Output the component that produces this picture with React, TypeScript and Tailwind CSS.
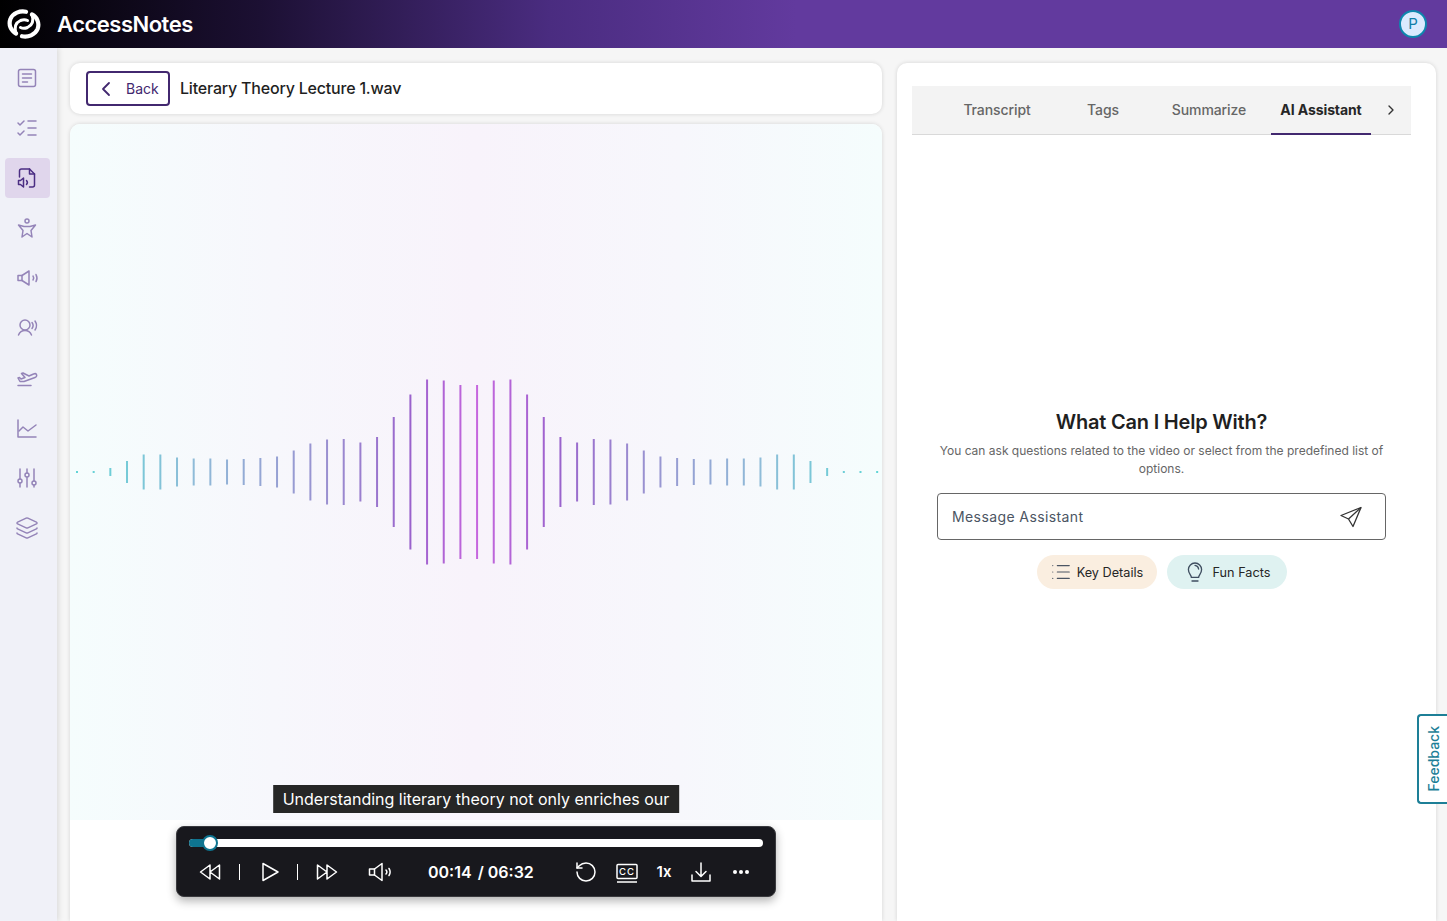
import { List, Layers, RotateCcw, ChevronLeft, ChevronRight, ListChecks } from "lucide-react";

const halfBars = [2, 2, 8, 22, 35, 35, 29, 27, 27, 25, 26, 28, 31, 43, 57, 65, 66, 59, 70, 110, 155, 185, 183, 174];
const bars = [...halfBars, ...[...halfBars].reverse(), 2];

function Logo() {
  return (
    <svg width="34" height="30" viewBox="0 0 34 30" fill="none" stroke="white" strokeLinecap="round">
      <path d="M19 2.800C13 1.500 6 4 3.400 10C1.200 16 4 22 9 24.500" strokeWidth="4.200" />
      <path d="M9 24.500C7 18 9 13.500 13.500 11.500C16 10.500 18.500 10.500 20.500 11.500" strokeWidth="3" />
      <path d="M15 27.200C21 28.500 28 26 30.600 20C32.800 14 30 8 25 5.500" strokeWidth="4.200" />
      <path d="M25 5.500C27 12 25 16.500 20.500 18.500C18 19.500 15.500 19.500 13.500 18.500" strokeWidth="3" />
    </svg>
  );
}

function NavIcon({ children }: { children: React.ReactNode }) {
  return (
    <svg width="24" height="24" viewBox="0 0 24 24" fill="none" stroke="currentColor" strokeWidth="1.500" strokeLinecap="round" strokeLinejoin="round">
      {children}
    </svg>
  );
}

const navIcons = [
  <NavIcon>
    <rect x="3.500" y="3.500" width="17" height="17" rx="2" />
    <path d="M7.500 8h9M7.500 12h9M7.500 16h5" />
  </NavIcon>,
  <ListChecks size={24} strokeWidth={1.500} />,
  <NavIcon>
    <path d="M4.500 11V5a2 2 0 0 1 2-2h8l5 5v11a2 2 0 0 1-2 2h-3" />
    <path d="M14.500 3v5h5" />
    <path d="M3.500 14.500v4h2l3 2.500v-9l-3 2.500h-2z" />
    <path d="M11.500 14.500a3 3 0 0 1 0 4" />
  </NavIcon>,
  <NavIcon>
    <circle cx="12" cy="5" r="2" />
    <path d="M3.500 9l5.500 1.500h6L20.500 9l-4.500 5.500 1 6.500-5-3.500L7 21l1-6.500z" />
  </NavIcon>,
  <NavIcon>
    <path d="M3 9.500h4v5H3z" />
    <path d="M7 9.500L14 5v14l-7-4.500" />
    <path d="M18 10a3.500 3.500 0 0 1 0 4M21 8.500a7 7 0 0 1 0 7" />
  </NavIcon>,
  <NavIcon>
    <circle cx="10" cy="9" r="5" />
    <path d="M3.500 19c1-2.500 3.500-4.500 6.500-4.500s5.500 2 6.500 4.500" />
    <path d="M17 6.500a5 5 0 0 1 0 6M20 5a8 8 0 0 1 0 9" />
  </NavIcon>,
  <NavIcon>
    <path d="M3 12l2 3.500h4l11-4c1.500-.5 2-2 1.500-3s-2-1-3-.5L14 10 8 7 6.500 7.500l3.500 4-4 1.500-1.500-1.500z" />
    <path d="M3 19.500h13" />
  </NavIcon>,
  <NavIcon>
    <path d="M3 4v17h18" />
    <path d="M4 15l4-4 5 4 8-6" />
  </NavIcon>,
  <NavIcon>
    <path d="M5 3v10M5 17v4M12 3v4M12 11v10M19 3v12M19 19v2" />
    <circle cx="5" cy="15" r="2" />
    <circle cx="12" cy="9" r="2" />
    <circle cx="19" cy="17" r="2" />
  </NavIcon>,
  <Layers size={24} strokeWidth={1.500} />,
];

function CtlIcon({ children }: { children: React.ReactNode }) {
  return (
    <svg width="24" height="24" viewBox="0 0 24 24" fill="none" stroke="white" strokeWidth="1.500" strokeLinecap="round" strokeLinejoin="round">
      {children}
    </svg>
  );
}

function Waveform() {
  return (
    <svg className="w-full h-[200px]" viewBox="0 0 812 200" fill="none">
      <defs>
        <linearGradient id="wave" gradientUnits="userSpaceOnUse" x1="0" y1="0" x2="812" y2="0">
          <stop offset="0" stopColor="#5fd6d6" />
          <stop offset="0.15" stopColor="#8fbcd8" />
          <stop offset="0.32" stopColor="#9a8fd0" />
          <stop offset="0.42" stopColor="#9a62cc" />
          <stop offset="0.5" stopColor="#c666de" />
          <stop offset="0.6" stopColor="#9a62cc" />
          <stop offset="0.7" stopColor="#9a8fd0" />
          <stop offset="0.85" stopColor="#8fbcd8" />
          <stop offset="1" stopColor="#5fd6d6" />
        </linearGradient>
      </defs>
      {bars.map((h, i) => {
        const x = 7 + i * 16.67;
        return <rect key={i} x={x - 1} y={100 - h / 2} width="2" height={h} fill="url(#wave)" />;
      })}
    </svg>
  );
}

export default function App() {
  return (
    <div className="h-[921px] w-full overflow-hidden relative flex flex-col bg-[#f6f6f6] font-['Inter',sans-serif] text-[#1f1f1f]">
      {/* Top bar */}
      <header className="h-12 shrink-0 flex items-center pl-[7px] pr-5 bg-[linear-gradient(90deg,#000000_0%,#1c1033_18%,#4a2c80_38%,#623a9e_55%,#623a9e_100%)]">
        <Logo />
        <span className="ml-[16px] text-[22px] font-semibold tracking-[-0.5px] text-white">AccessNotes</span>
        <div className="ml-auto w-7 h-7 rounded-full bg-[#dbeafe] border-2 border-[#0e86ad] flex items-center justify-center text-[15px] text-[#0e7ea8]">
          P
        </div>
      </header>

      <div className="flex-1 flex min-h-0">
        {/* Sidebar */}
        <aside className="w-[57px] shrink-0 bg-[#f0f1f8] shadow-[2px_0_5px_rgba(0,0,0,0.1)] pt-[10px] px-[5px] flex flex-col gap-[10px]">
          {navIcons.map((icon, i) => (
            <div
              key={i}
              className={
                i === 2
                  ? "h-10 w-[45px] shrink-0 rounded-[4px] bg-[#e0d6ec] text-[#4b2e83] flex items-center justify-center pr-px"
                  : "h-10 w-[45px] shrink-0 text-[#9484b8] flex items-center justify-center pr-px"
              }
            >
              {icon}
            </div>
          ))}
        </aside>

        <main className="flex-1 flex gap-[15px] pt-[15px] pl-[13px] min-w-0">
          {/* Left column */}
          <section className="w-[812px] shrink-0 flex flex-col gap-[10px]">
            <div className="h-[51px] shrink-0 rounded-[10px] bg-white shadow-[0_0_4px_rgba(0,0,0,0.14)] flex items-center pl-4">
              <button className="w-[84px] h-[35px] rounded-[4px] border-2 border-[#42286f] flex items-center pl-[6px] text-[14px] text-[#42286f]">
                <ChevronLeft size={24} strokeWidth={1.800} />
                <span className="ml-[8px]">Back</span>
              </button>
              <h1 className="ml-[10px] pb-px text-[16px] font-medium tracking-[-0.2px]">Literary Theory Lecture 1.wav</h1>
            </div>

            <div className="flex-1 rounded-t-[10px] bg-white shadow-[0_0_4px_rgba(0,0,0,0.14)] relative flex flex-col">
              <div className="h-[696px] rounded-t-[10px] bg-[linear-gradient(90deg,#f5fdfd_0%,#f7f7fc_25%,#f8f3fb_50%,#f7f7fc_75%,#f5fdfd_100%)] flex items-center relative">
                <div className="w-full mt-[-1px]">
                  <Waveform />
                </div>
                <div className="absolute bottom-[7px] left-1/2 -translate-x-1/2 h-7 px-[9.500px] pb-px bg-[#262626] text-white text-[16px] flex items-center whitespace-nowrap">
                  Understanding literary theory not only enriches our
                </div>
              </div>

              {/* Player */}
              <div className="absolute left-[106px] top-[702px] w-[600px] h-[71px] rounded-lg bg-[#18181d] border border-[#3a3a3e] shadow-[0_4px_10px_rgba(0,0,0,0.3)] px-3 pt-[12px] text-white">
                <div className="relative h-2 rounded-full bg-white">
                  <div className="absolute left-0 top-0 h-2 w-[22px] rounded-l-full bg-[#0e7490]" />
                  <div className="absolute left-[13px] top-[-4px] w-4 h-4 rounded-full bg-white border-2 border-[#0e7490]" />
                </div>
                <div className="flex items-center mt-[13px] h-6">
                  <div className="ml-[9px]">
                    <CtlIcon>
                      <path d="M12 5l-9.500 7 9.500 7zM21.500 5L12 12l9.500 7z" />
                    </CtlIcon>
                  </div>
                  <div className="ml-[17px] w-px h-[16px] bg-white" />
                  <div className="ml-[18px]">
                    <CtlIcon>
                      <path d="M5 3.500L20 12 5 20.500z" />
                    </CtlIcon>
                  </div>
                  <div className="ml-[15px] w-px h-[16px] bg-white" />
                  <div className="ml-[17px]">
                    <CtlIcon>
                      <path d="M2.500 5l9.500 7-9.500 7zM12 5l9.500 7-9.500 7z" />
                    </CtlIcon>
                  </div>
                  <div className="ml-[29px]">
                    <CtlIcon>
                      <path d="M1.500 9h5v6h-5z" />
                      <path d="M6.500 9L14 3.500v17L6.500 15" />
                      <path d="M18 10a3 3 0 0 1 0 4M21 8.500a6.500 6.500 0 0 1 0 7" />
                    </CtlIcon>
                  </div>
                  <div className="ml-[36px] w-[106px] shrink-0 text-[16px] font-semibold whitespace-nowrap">
                    00:14<span className="ml-[6px]">/ 06:32</span>
                  </div>
                  <div className="ml-[40px]">
                    <RotateCcw size={24} strokeWidth={1.500} />
                  </div>
                  <div className="ml-[17px]">
                    <svg width="24" height="24" viewBox="0 0 24 24" fill="none" stroke="white" strokeWidth="1.500">
                      <rect x="2" y="4.500" width="20" height="14" rx="1" />
                      <text x="12" y="15" textAnchor="middle" fontFamily="Inter, sans-serif" fontSize="9.500" fontWeight="500" letterSpacing="1" fill="white" stroke="none">
                        CC
                      </text>
                      <path d="M2 22h20" stroke="#c8c8c8" strokeWidth="2" />
                    </svg>
                  </div>
                  <div className="ml-[15px] w-5 text-center text-[15px] font-semibold">1x</div>
                  <div className="ml-[15px]">
                    <CtlIcon>
                      <path d="M12 3v13M7 11.500l5 5 5-5M3 15v6h18v-6" />
                    </CtlIcon>
                  </div>
                  <div className="ml-[16px]">
                    <svg width="24" height="24" viewBox="0 0 24 24" fill="white">
                      <circle cx="6" cy="12" r="2" />
                      <circle cx="12" cy="12" r="2" />
                      <circle cx="18" cy="12" r="2" />
                    </svg>
                  </div>
                </div>
              </div>
            </div>
          </section>

          {/* Right column */}
          <section className="w-[539px] shrink-0 rounded-t-[10px] bg-white shadow-[0_0_4px_rgba(0,0,0,0.14)] pl-[15px] pr-[25px] pt-[23px] flex flex-col items-stretch">
            <div className="h-[49px] bg-[#f3f3f3] border-b border-[#d9d9d9] flex items-stretch pl-[32px] text-[14px] font-medium tracking-[-0.1px] text-[#666666]">
              <div className="w-[106px] flex items-center justify-center pb-[2px]">Transcript</div>
              <div className="w-[106px] flex items-center justify-center pb-[2px]">Tags</div>
              <div className="w-[106px] flex items-center justify-center pb-[2px]">Summarize</div>
              <div className="ml-[9px] w-[100px] flex items-center justify-center font-bold text-[#262626] border-b-2 border-[#42286f] -mb-px">
                AI Assistant
              </div>
              <div className="ml-[12px] w-4 flex items-center justify-center text-[#333333]">
                <ChevronRight size={16} strokeWidth={2} />
              </div>
            </div>

            <div className="pt-[273px] flex flex-col items-center px-[25px]">
              <h2 className="text-[20px] leading-[28px] font-semibold tracking-[-0.2px]">What Can I Help With?</h2>
              <p className="mt-[6px] text-[12px] leading-[18px] text-center text-[#666666]">
                You can ask questions related to the video or select from the predefined list of options.
              </p>
              <div className="mt-[15px] w-[449px] h-[47px] shrink-0 rounded-[4px] border border-[#666666] flex items-center pl-[14px] pr-[22px]">
                <span className="text-[14px] tracking-[0.4px] text-[#4b5563]">Message Assistant</span>
                <svg className="ml-auto" width="24" height="24" viewBox="0 0 24 24" fill="none" stroke="#333333" strokeWidth="1.300" strokeLinejoin="round">
                  <path d="M22 2.500L2 10.500l7.500 3.500 4.500 7.500z" />
                  <path d="M22 2.500L9.500 14" />
                </svg>
              </div>
              <div className="mt-[15px] flex gap-[10px]">
                <button className="w-[120px] h-[34px] rounded-full bg-[#faeee0] flex items-center justify-center gap-[5px] text-[12.7px] text-[#262626]">
                  <List size={22} strokeWidth={1.300} className="text-[#4b5563]" />
                  <span className="pt-px">Key Details</span>
                </button>
                <button className="w-[120px] h-[34px] rounded-full bg-[#dff2f1] flex items-center justify-center gap-[6px] text-[12.7px] text-[#262626]">
                  <svg width="24" height="24" viewBox="0 0 20 20" fill="none" stroke="#3f4e60" strokeWidth="1.100" strokeLinecap="round">
                    <path d="M7 14.500c0-2-2.500-3-2.500-6.500a5.500 5.500 0 0 1 11 0c0 3.500-2.500 4.500-2.500 6.500z" />
                    <path d="M7.500 17.500h5M10 4.500a3.500 3.500 0 0 1 3 3" />
                  </svg>
                  <span className="pt-px">Fun Facts</span>
                </button>
              </div>
            </div>
          </section>
        </main>
      </div>

      {/* Feedback tab */}
      <div className="absolute right-0 top-[714px] w-[30px] h-[90px] rounded-l-[4px] bg-white border-2 border-r-0 border-[#1d7f97] flex items-center justify-center">
        <span className="[writing-mode:vertical-rl] rotate-180 text-[14px] font-medium text-[#1d7f97]">Feedback</span>
      </div>
    </div>
  );
}
